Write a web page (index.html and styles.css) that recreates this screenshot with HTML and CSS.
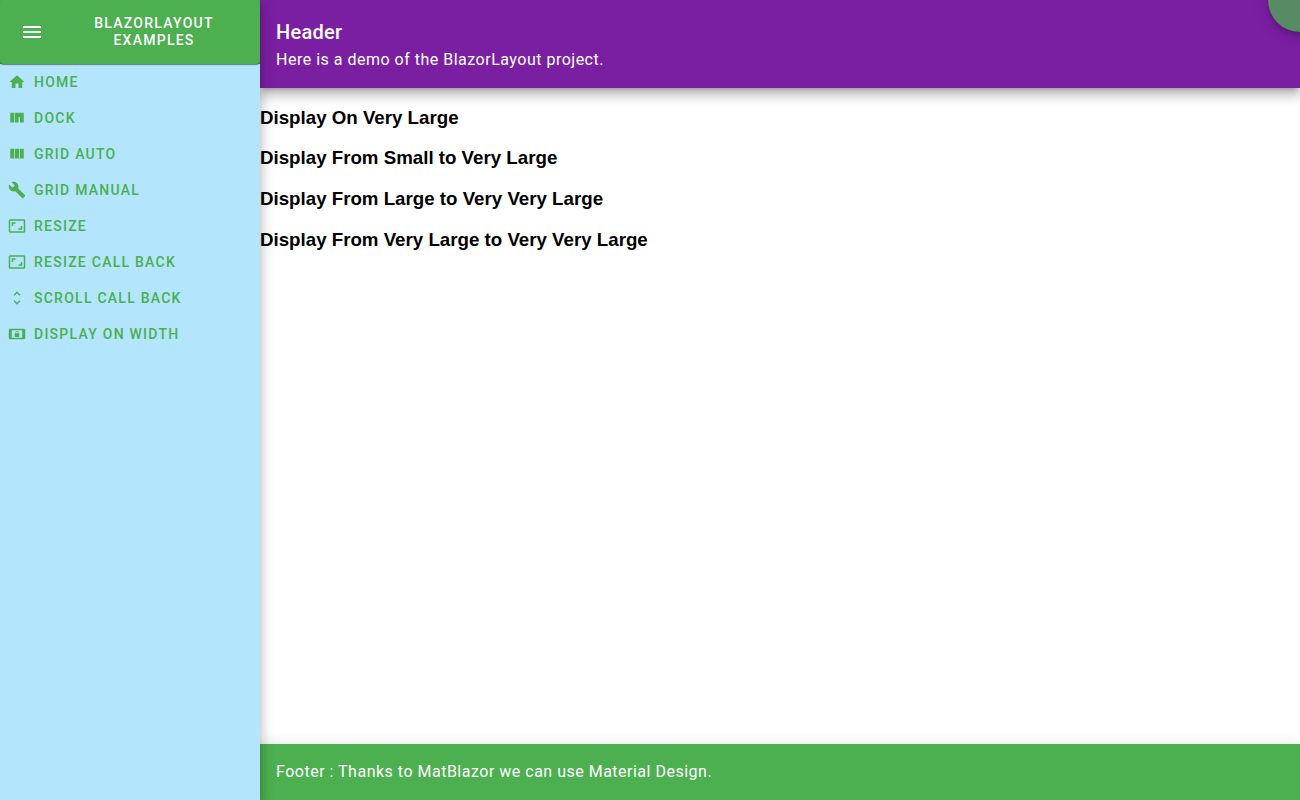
FILE: index.html
```html
<!DOCTYPE html>
<html lang="en">
<head>
<meta charset="utf-8">
<meta name="viewport" content="width=device-width, initial-scale=1">
<title>BlazorLayout Examples</title>
<link rel="stylesheet" href="styles.css">
</head>
<body>
<div class="layout">
  <aside class="drawer">
    <div class="brand-bar">
      <button class="brand" type="button">
        <svg class="brand-icon" viewBox="0 0 24 24" aria-hidden="true"><path d="M3 18h18v-2H3v2zm0-5h18v-2H3v2zm0-7v2h18V6H3z"/></svg>
        <span class="brand-title">BlazorLayout Examples</span>
      </button>
    </div>
    <nav class="menu">
      <a class="menu-item" href="#home"><svg class="menu-icon" viewBox="0 0 24 24" aria-hidden="true"><path d="M10 20v-6h4v6h5v-8h3L12 3 2 12h3v8z"/></svg>Home</a>
      <a class="menu-item" href="#dock"><svg class="menu-icon" viewBox="0 0 24 24" aria-hidden="true"><path d="M3 5v13h5V5H3zM9 5v13h5v-7h2v7h5V5H9z"/></svg>Dock</a>
      <a class="menu-item" href="#grid-auto"><svg class="menu-icon" viewBox="0 0 24 24" aria-hidden="true"><path d="M9 18h6V5H9v13zm-6 0h5V5H3v13zM16 5v13h5V5h-5z"/></svg>Grid Auto</a>
      <a class="menu-item" href="#grid-manual"><svg class="menu-icon" viewBox="0 0 24 24" aria-hidden="true"><path d="M22.700 19l-9.100-9.100c.9-2.300.4-5-1.500-6.900-2-2-5-2.400-7.400-1.300L9 6 6 9 1.600 4.700C.4 7.100.9 10.100 2.900 12.100c1.900 1.900 4.600 2.400 6.900 1.500l9.100 9.100c.4.4 1 .4 1.400 0l2.300-2.300c.5-.4.5-1.100.1-1.400z"/></svg>Grid Manual</a>
      <a class="menu-item" href="#resize"><svg class="menu-icon" viewBox="0 0 24 24" aria-hidden="true"><path d="M19 12h-2v3h-3v2h5v-5zM7 9h3V7H5v5h2V9zm14-6H3c-1.100 0-2 .9-2 2v14c0 1.100.9 2 2 2h18c1.100 0 2-.9 2-2V5c0-1.100-.9-2-2-2zm0 16.010H3V4.990h18v14.020z"/></svg>Resize</a>
      <a class="menu-item" href="#resize-call-back"><svg class="menu-icon" viewBox="0 0 24 24" aria-hidden="true"><path d="M19 12h-2v3h-3v2h5v-5zM7 9h3V7H5v5h2V9zm14-6H3c-1.100 0-2 .9-2 2v14c0 1.100.9 2 2 2h18c1.100 0 2-.9 2-2V5c0-1.100-.9-2-2-2zm0 16.010H3V4.990h18v14.020z"/></svg>Resize Call Back</a>
      <a class="menu-item" href="#scroll-call-back"><svg class="menu-icon" viewBox="0 0 24 24" aria-hidden="true"><path d="M12 5.830L15.170 9l1.410-1.410L12 3 7.410 7.590 8.830 9 12 5.830zm0 12.340L8.830 15l-1.410 1.410L12 21l4.590-4.590L15.170 15 12 18.170z"/></svg>Scroll Call Back</a>
      <a class="menu-item" href="#display-on-width"><svg class="menu-icon" viewBox="0 0 24 24" aria-hidden="true"><path d="M10 16h4c.55 0 1-.45 1-1v-3c0-.55-.45-1-1-1v-1c0-1.110-.9-2-2-2-1.110 0-2 .9-2 2v1c-.55 0-1 .45-1 1v3c0 .55.45 1 1 1zm.8-6c0-.66.54-1.200 1.200-1.200.66 0 1.200.54 1.200 1.200v1h-2.400v-1zM21 5H3c-1.100 0-2 .9-2 2v10c0 1.100.9 2 2 2h18c1.100 0 2-.9 2-2V7c0-1.100-.9-2-2-2zm-2 12H5V7h14v10z"/></svg>Display On Width</a>
    </nav>
  </aside>
  <div class="page">
    <header class="header">
      <h1 class="header-title">Header</h1>
      <p class="header-text">Here is a demo of the BlazorLayout project.</p>
    </header>
    <main class="content">
      <h3>Display On Very Large</h3>
      <h3>Display From Small to Very Large</h3>
      <h3>Display From Large to Very Very Large</h3>
      <h3>Display From Very Large to Very Very Large</h3>
    </main>
    <footer class="footer">Footer : Thanks to MatBlazor we can use Material Design.</footer>
    <button class="corner-button" type="button" aria-label="Toggle panel"></button>
  </div>
</div>
</body>
</html>
```

FILE: styles.css
```css
* {
  box-sizing: border-box;
}

body {
  margin: 0;
  font-family: Roboto, sans-serif;
}

.layout {
  display: grid;
  grid-template-columns: 260px 1fr;
  min-height: 100vh;
}

.drawer {
  position: relative;
  z-index: 2;
  background: #b3e5fc;
  box-shadow: 0 5px 5px -3px rgba(0, 0, 0, 0.2), 0 8px 10px 1px rgba(0, 0, 0, 0.14), 0 3px 14px 2px rgba(0, 0, 0, 0.12);
}

.brand-bar {
  background: #4caf50;
}

.brand {
  display: flex;
  align-items: center;
  width: 100%;
  height: 64px;
  padding: 0 16px 0 20px;
  gap: 20px;
  border: 0;
  border-radius: 4px;
  background: #4caf50;
  color: #fff;
  font: 500 14px/17px Roboto, sans-serif;
  letter-spacing: 0.09em;
  text-transform: uppercase;
  box-shadow: 0 1px 1px 0 rgba(0, 0, 0, 0.45);
  cursor: pointer;
}

.brand-icon {
  flex: none;
  width: 24px;
  height: 24px;
  fill: currentColor;
}

.brand-title {
  flex: 1;
  padding: 0 24px;
  text-align: center;
}

.menu {
  display: flex;
  flex-direction: column;
}

.menu-item {
  display: flex;
  align-items: center;
  gap: 8px;
  height: 36px;
  padding: 0 8px;
  color: #4caf50;
  font-size: 14px;
  font-weight: 500;
  letter-spacing: 0.0892857em;
  text-decoration: none;
  text-transform: uppercase;
}

.menu-icon {
  width: 18px;
  height: 18px;
  fill: currentColor;
}

.page {
  position: relative;
  display: flex;
  flex-direction: column;
  min-width: 0;
  overflow: hidden;
}

.header {
  z-index: 1;
  padding: 16px;
  background: #7b1fa2;
  color: #fff;
  box-shadow: 0 5px 5px -3px rgba(0, 0, 0, 0.2), 0 8px 10px 1px rgba(0, 0, 0, 0.14), 0 3px 14px 2px rgba(0, 0, 0, 0.12);
}

.header-title {
  margin: 0;
  font-size: 20px;
  font-weight: 500;
  line-height: 32px;
  letter-spacing: 0.0125em;
}

.header-text {
  margin: 0;
  font-size: 16px;
  line-height: 24px;
  letter-spacing: 0.03125em;
}

.content {
  flex: 1;
  background: #fff;
  color: #000;
  font-family: "Liberation Sans", Arial, sans-serif;
}

.footer {
  z-index: 1;
  padding: 16px;
  background: #4caf50;
  color: #fff;
  font-size: 16px;
  line-height: 24px;
  letter-spacing: 0.03125em;
  box-shadow: 0 5px 5px -3px rgba(0, 0, 0, 0.2), 0 8px 10px 1px rgba(0, 0, 0, 0.14), 0 3px 14px 2px rgba(0, 0, 0, 0.12);
}

.corner-button {
  position: absolute;
  top: -32px;
  right: -32px;
  z-index: 2;
  width: 64px;
  height: 64px;
  padding: 0;
  border: 0;
  border-radius: 50%;
  background: #4caf50;
  opacity: 0.75;
  box-shadow: 0 3px 5px -1px rgba(0, 0, 0, 0.2), 0 6px 10px 0 rgba(0, 0, 0, 0.14), 0 1px 18px 0 rgba(0, 0, 0, 0.12);
  cursor: pointer;
}
```
